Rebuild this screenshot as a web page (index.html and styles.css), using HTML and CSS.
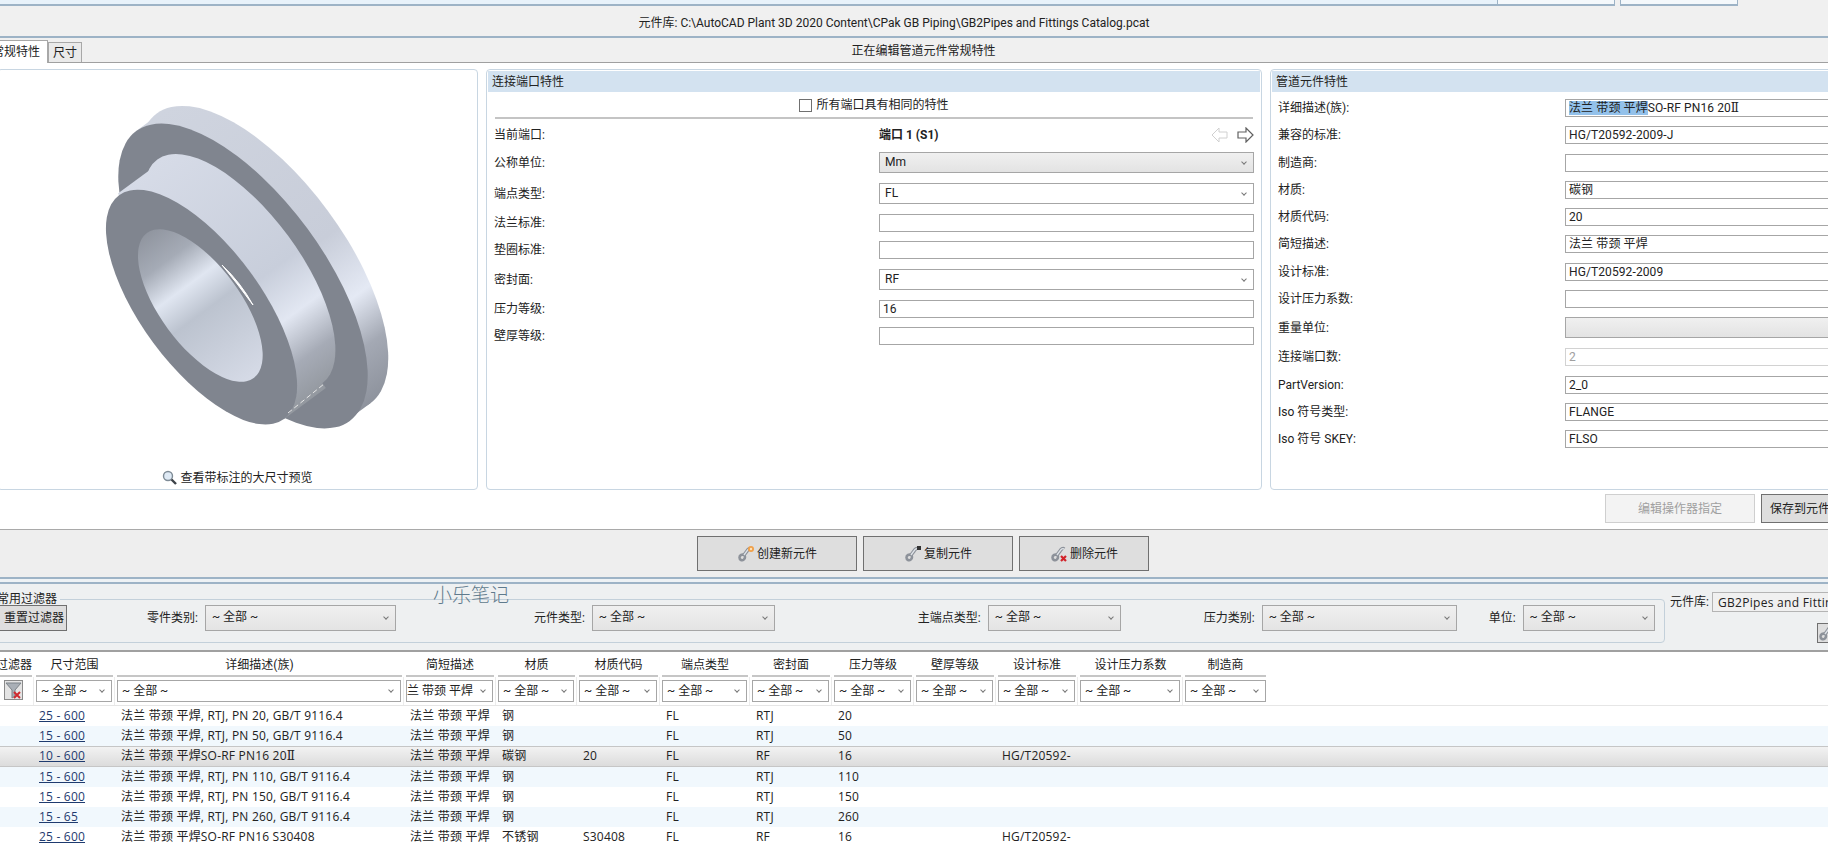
FILE: index.html
```html
<!DOCTYPE html>
<html>
	<head>
		<meta charset="utf-8">
		<title>元件库</title>
		<link rel="stylesheet" href="styles.css">
	</head>
	<body>
		<svg class="defs">
			<defs>
				<linearGradient id="rim" gradientUnits="userSpaceOnUse" x1="-180" y1="0" x2="180" y2="0">
					<stop offset="0" stop-color="#cfd4df"/><stop offset=".55" stop-color="#c8cdd9"/><stop offset=".73" stop-color="#e4e9f4"/><stop offset=".86" stop-color="#a4a9b4"/><stop offset="1" stop-color="#8d929c"/>
				</linearGradient>
				<linearGradient id="hub" gradientUnits="userSpaceOnUse" x1="-139" y1="0" x2="143" y2="0">
					<stop offset="0" stop-color="#d6dbe7"/><stop offset=".55" stop-color="#c8cedb"/><stop offset=".72" stop-color="#e2e7f2"/><stop offset=".87" stop-color="#a6abb6"/><stop offset="1" stop-color="#93989f"/>
				</linearGradient>
				<linearGradient id="bore" gradientUnits="userSpaceOnUse" x1="-90" y1="0" x2="90" y2="0">
					<stop offset="0" stop-color="#8f949e"/><stop offset=".2" stop-color="#a5abb6"/><stop offset=".38" stop-color="#e0e6f1"/><stop offset=".55" stop-color="#bcc3cf"/><stop offset="1" stop-color="#d5dae6"/>
				</linearGradient>
				<symbol id="part" viewBox="0 0 18 18">
					<path d="M4 15c-2-1-2-4 0-5s4 0 4 2-2 4-4 3z" fill="none" stroke="#8d929a" stroke-width="2.6"/>
					<path d="M7 10l3-4c1-2 3-3 4-2" fill="none" stroke="#8d929a" stroke-width="3.6"/>
					<path d="M7 10l3-4c1-2 3-3 4-2" fill="none" stroke="#dfe3e8" stroke-width="1.4"/>
				</symbol>
			</defs>
		</svg>

		<!-- 顶部 -->
		<div class="strip">
			<div class="strip-fill"></div>
			<div class="strip-tab"></div>
			<div class="strip-tab"></div>
		</div>
		<div class="catalog-bar">元件库: C:\AutoCAD Plant 3D 2020 Content\CPak GB Piping\GB2Pipes and Fittings Catalog.pcat</div>
		<div class="tab-bar">
			<div class="tab tab-on">常规特性</div>
			<div class="tab">尺寸</div>
			<div class="tab-title">正在编辑管道元件常规特性</div>
		</div>

		<div class="editor">
			<div class="panels">
				<!-- 预览 -->
				<div class="panel preview">
					<svg class="flange" viewBox="0 70 478 396">
						<g transform="translate(242 275) rotate(53.6)">
							<ellipse cx="-2" cy="-27" rx="180" ry="80" fill="url(#rim)"/>
							<rect x="-180" y="-27" width="358" height="27" fill="url(#rim)"/>
							<ellipse cx="0" cy="0" rx="180" ry="80" fill="#80858f"/>
						</g>
						<g transform="translate(240 272) rotate(53.6)">
							<ellipse cx="-2" cy="0" rx="139" ry="60" fill="url(#hub)"/>
							<rect x="-137" y="0" width="280" height="52" fill="url(#hub)"/>
							<ellipse cx="4" cy="52" rx="139" ry="60" fill="#80858f"/>
							<ellipse cx="2" cy="52" rx="90" ry="40" fill="url(#bore)"/>
						</g>
						<path d="M221 264Q240 282 252 304Q236 282 221 264z" fill="#fff" stroke="#fff"/>
						<path d="M287 412L323 383" stroke="#e8e8e8" stroke-dasharray="5 3" fill="none"/>
					</svg>
					<div class="preview-link">
						<svg width="15" height="15" viewBox="0 0 15 15"><circle cx="6" cy="6" r="4.5" fill="#dfeaf5" stroke="#7e8b96" stroke-width="1.4"/><path d="M9.5 9.5L14 14" stroke="#3c4248" stroke-width="2.4"/></svg>
						<span>查看带标注的大尺寸预览</span>
					</div>
				</div>

				<!-- 连接端口特性 -->
				<div class="panel port">
					<div class="panel-head">连接端口特性</div>
					<div class="check-row"><span class="check"></span>所有端口具有相同的特性</div>
					<div class="rows">
						<div class="row row-port">
							<div>当前端口:</div>
							<div class="port-name">
								<b>端口 1 (S1)</b>
								<span class="arrows">
									<svg width="17" height="16" viewBox="0 0 17 16"><path d="M16 5H8V1L1 8 8 15V11H16z" fill="#fff" stroke="#d0d0d0"/></svg>
									<svg width="17" height="16" viewBox="0 0 17 16"><path d="M1 5H9V1L16 8 9 15V11H1z" fill="#fff" stroke="#606060" stroke-width="1.2"/></svg>
								</span>
							</div>
						</div>
						<div class="row gap10"><div>公称单位:</div><div class="sel sel-grey">Mm</div></div>
						<div class="row gap10"><div>端点类型:</div><div class="sel">FL</div></div>
						<div class="row"><div>法兰标准:</div><div class="inp"></div></div>
						<div class="row gap10"><div>垫圈标准:</div><div class="inp"></div></div>
						<div class="row gap10"><div>密封面:</div><div class="sel">RF</div></div>
						<div class="row"><div>压力等级:</div><div class="inp">16</div></div>
						<div class="row"><div>壁厚等级:</div><div class="inp"></div></div>
					</div>
				</div>

				<!-- 管道元件特性 -->
				<div class="panel part">
					<div class="panel-head">管道元件特性</div>
					<div class="rows">
						<div class="row"><div>详细描述(族):</div><div class="inp"><span class="picked">法兰 带颈 平焊</span>SO-RF PN16 20<span class="roman">Ⅱ</span></div></div>
						<div class="row gap10"><div>兼容的标准:</div><div class="inp">HG/T20592-2009-J</div></div>
						<div class="row"><div>制造商:</div><div class="inp"></div></div>
						<div class="row"><div>材质:</div><div class="inp">碳钢</div></div>
						<div class="row"><div>材质代码:</div><div class="inp">20</div></div>
						<div class="row gap10"><div>简短描述:</div><div class="inp">法兰 带颈 平焊</div></div>
						<div class="row"><div>设计标准:</div><div class="inp">HG/T20592-2009</div></div>
						<div class="row"><div>设计压力系数:</div><div class="inp"></div></div>
						<div class="row gap10"><div>重量单位:</div><div class="sel-blank"></div></div>
						<div class="row gap10"><div>连接端口数:</div><div class="inp inp-off">2</div></div>
						<div class="row"><div>PartVersion:</div><div class="inp">2_0</div></div>
						<div class="row"><div>Iso 符号类型:</div><div class="inp">FLANGE</div></div>
						<div class="row"><div>Iso 符号 SKEY:</div><div class="inp">FLSO</div></div>
					</div>
				</div>
			</div>
			<div class="editor-btns">
				<div class="btn-off">编辑操作器指定</div>
				<div class="btn-save">保存到元件库</div>
			</div>
		</div>

		<!-- 创建 复制 删除 -->
		<div class="actions">
			<div class="act act-new">
				<svg width="18" height="18" viewBox="0 0 18 18"><use href="#part"/><circle cx="14" cy="4" r="3" fill="#f0a04a"/><circle cx="14" cy="4" r="1.2" fill="#fde2b8"/></svg>
				创建新元件
			</div>
			<div class="act act-copy">
				<svg width="18" height="18" viewBox="0 0 18 18"><use href="#part"/><rect x="13" y="1" width="4" height="4" fill="#333"/></svg>
				复制元件
			</div>
			<div class="act act-del">
				<svg width="18" height="18" viewBox="0 0 18 18"><use href="#part"/><path d="M11 11l5 5M16 11l-5 5" stroke="#d2232a" stroke-width="2.2"/></svg>
				删除元件
			</div>
		</div>
		<div class="split"></div>

		<!-- 常用过滤器 -->
		<div class="filters">
			<fieldset class="common">
				<legend>常用过滤器</legend>
				<div class="reset">重置过滤器</div>
				<div class="f-group f-part"><label>零件类别:</label><div class="sel sel-f">~ 全部 ~</div></div>
				<div class="f-group f-type"><label>元件类型:</label><div class="sel sel-f">~ 全部 ~</div></div>
				<div class="f-group f-end"><label>主端点类型:</label><div class="sel sel-f">~ 全部 ~</div></div>
				<div class="f-group f-press"><label>压力类别:</label><div class="sel sel-f">~ 全部 ~</div></div>
				<div class="f-group f-unit"><label>单位:</label><div class="sel sel-f">~ 全部 ~</div></div>
			</fieldset>
			<div class="catalog-side">
				<div class="catalog-pick"><label>元件库:</label><div class="catalog-name">GB2Pipes and Fittings Catalog</div></div>
				<div class="catalog-btn">
					<svg width="18" height="18" viewBox="0 0 18 18"><use href="#part"/></svg>
				</div>
			</div>
			<div class="watermark">小乐笔记</div>
		</div>

		<!-- 表格 -->
		<div class="grid">
			<div class="g-row g-head">
				<div class="cut-left">过滤器</div><div>尺寸范围</div><div>详细描述(族)</div><div>简短描述</div><div>材质</div><div>材质代码</div><div>端点类型</div><div>密封面</div><div>压力等级</div><div>壁厚等级</div><div>设计标准</div><div>设计压力系数</div><div>制造商</div>
			</div>
			<div class="g-row g-filter">
				<div><span class="funnel">
					<svg width="17" height="18" viewBox="0 0 17 18"><path d="M1 2H16L10 9V15L7 17V9z" fill="#a9afb6" stroke="#7d8389"/><path d="M9 11l6 6M15 11l-6 6" stroke="#cf2a2f" stroke-width="2"/></svg>
				</span></div>
				<div><div class="sel sel-g">~ 全部 ~</div></div>
				<div><div class="sel sel-g">~ 全部 ~</div></div>
				<div><div class="sel sel-g"><span class="clipped">法兰 带颈 平焊</span></div></div>
				<div><div class="sel sel-g">~ 全部 ~</div></div>
				<div><div class="sel sel-g">~ 全部 ~</div></div>
				<div><div class="sel sel-g">~ 全部 ~</div></div>
				<div><div class="sel sel-g">~ 全部 ~</div></div>
				<div><div class="sel sel-g">~ 全部 ~</div></div>
				<div><div class="sel sel-g">~ 全部 ~</div></div>
				<div><div class="sel sel-g">~ 全部 ~</div></div>
				<div><div class="sel sel-g">~ 全部 ~</div></div>
				<div><div class="sel sel-g">~ 全部 ~</div></div>
			</div>
			<div class="g-row g-data">
				<div></div><div><a>25 - 600</a></div><div>法兰 带颈 平焊, RTJ, PN 20, GB/T 9116.4</div><div>法兰 带颈 平焊</div><div>钢</div><div></div><div>FL</div><div>RTJ</div><div>20</div><div></div><div></div><div></div><div></div>
			</div>
			<div class="g-row g-data g-band">
				<div></div><div><a>15 - 600</a></div><div>法兰 带颈 平焊, RTJ, PN 50, GB/T 9116.4</div><div>法兰 带颈 平焊</div><div>钢</div><div></div><div>FL</div><div>RTJ</div><div>50</div><div></div><div></div><div></div><div></div>
			</div>
			<div class="g-row g-data g-on">
				<div></div><div><a>10 - 600</a></div><div>法兰 带颈 平焊SO-RF PN16 20<span class="roman">Ⅱ</span></div><div>法兰 带颈 平焊</div><div>碳钢</div><div>20</div><div>FL</div><div>RF</div><div>16</div><div></div><div>HG/T20592-</div><div></div><div></div>
			</div>
			<div class="g-row g-data g-band">
				<div></div><div><a>15 - 600</a></div><div>法兰 带颈 平焊, RTJ, PN 110, GB/T 9116.4</div><div>法兰 带颈 平焊</div><div>钢</div><div></div><div>FL</div><div>RTJ</div><div>110</div><div></div><div></div><div></div><div></div>
			</div>
			<div class="g-row g-data">
				<div></div><div><a>15 - 600</a></div><div>法兰 带颈 平焊, RTJ, PN 150, GB/T 9116.4</div><div>法兰 带颈 平焊</div><div>钢</div><div></div><div>FL</div><div>RTJ</div><div>150</div><div></div><div></div><div></div><div></div>
			</div>
			<div class="g-row g-data g-band">
				<div></div><div><a>15 - 65</a></div><div>法兰 带颈 平焊, RTJ, PN 260, GB/T 9116.4</div><div>法兰 带颈 平焊</div><div>钢</div><div></div><div>FL</div><div>RTJ</div><div>260</div><div></div><div></div><div></div><div></div>
			</div>
			<div class="g-row g-data">
				<div></div><div><a>25 - 600</a></div><div>法兰 带颈 平焊SO-RF PN16 S30408</div><div>法兰 带颈 平焊</div><div>不锈钢</div><div>S30408</div><div>FL</div><div>RF</div><div>16</div><div></div><div>HG/T20592-</div><div></div><div></div>
			</div>
		</div>
	</body>
</html>
```
FILE: styles.css
```css
*{
	margin: 0;
	padding: 0;
	box-sizing: border-box;
}

body{
	width: 1828px;
	height: 866px;
	overflow: hidden;
	position: relative;
	background: #fff;
	color: #222;
	font: 12px/16px Roboto, "Noto Sans CJK SC", sans-serif;
}

.defs{
	display: block;
	width: 0;
	height: 0;
}

.roman{
	font-family: "DejaVu Serif", serif;
}

/************************ 顶部 ************************/
.strip{
	display: flex;
	height: 6px;
	background: #f0f0f0;
}

.strip-fill{
	width: 1497px;
	background: #e8f2fa;
	border-bottom: 2px solid #9db3c6;
}

.strip-tab{
	width: 118px;
	border: 1px solid #9db3c6;
	border-width: 0 1px 2px;
	background: #f4f8fb;
}

.strip-tab + .strip-tab{
	margin-left: 5px;
}

.catalog-bar{
	height: 32px;
	padding: 9px 40px 0 0;
	text-align: center;
	background: #f0f0f0;
	border-bottom: 2px solid #9db3c6;
}

.tab-bar{
	display: flex;
	height: 25px;
	background: #f0f0f0;
	border-bottom: 1px solid #a0a0a0;
}

.tab{
	width: 34px;
	height: 20px;
	margin-top: 4px;
	padding-top: 2px;
	text-align: center;
	border: 1px solid #a8a8a8;
	border-bottom: 0;
	background: #eaeaea;
}

.tab-on{
	display: flex;
	justify-content: flex-end;
	width: 48px;
	height: 23px;
	margin: 2px 0 0;
	padding: 3px 7px 0 0;
	white-space: nowrap;
	border-left: 0;
	background: #fff;
	position: relative;
}

.tab-title{
	flex: 1;
	padding: 5px 63px 0 0;
	text-align: center;
}

/************************ 编辑区 ************************/
.editor{
	height: 467px;
	padding-top: 6px;
	border-bottom: 1px solid #a9a9a9;
}

.panels{
	display: flex;
	gap: 8px;
	height: 421px;
	margin-left: -3px;
}

.panel{
	flex: none;
	padding: 1px 1px;
	border: 1px solid #c8d6e2;
	border-radius: 4px;
}

.preview{
	width: 481px;
	display: flex;
	flex-direction: column;
}

.flange{
	display: block;
	width: 478px;
	height: 396px;
	margin-left: 2px;
	flex: none;
}

.preview-link{
	display: flex;
	justify-content: center;
	align-items: center;
	gap: 3px;
	height: 22px;
}

.port{
	width: 776px;
}

.part{
	width: 640px;
}

.panel-head{
	height: 21px;
	padding: 3px 0 0 4px;
	background: #d3e2f0;
}

.check-row{
	display: flex;
	justify-content: center;
	align-items: center;
	gap: 4px;
	height: 27px;
	margin: 0 7px;
	padding-top: 1px;
	border-bottom: 2px solid #c4c4c4;
}

.check{
	width: 13px;
	height: 13px;
	border: 1px solid #707070;
	background: #fff;
}

.rows{
	margin-left: 6px;
}

.port .rows{
	margin-top: 5px;
}

.part .rows{
	margin-top: 7px;
}

.row{
	display: grid;
	align-items: center;
	margin-bottom: 9px;
}

.gap10{
	margin-bottom: 10px;
}

.port .row{
	grid-template-columns: 385px 375px;
}

.part .row{
	grid-template-columns: 287px 1fr;
	margin-right: -10px;
}

.row-port{
	height: 22px;
	margin-bottom: 6px;
}

.port-name{
	display: flex;
	justify-content: space-between;
	align-items: center;
}

.arrows{
	display: flex;
	gap: 9px;
}

.inp{
	height: 18px;
	padding-left: 3px;
	line-height: 16px;
	white-space: nowrap;
	letter-spacing: .1px;
	border: 1px solid #a6a6a6;
	background: #fff;
}

.inp-off{
	color: #a0a0a0;
	border-color: #d2d2d2;
}

.picked{
	background: #93c1ea;
}

.sel{
	position: relative;
	height: 21px;
	padding-left: 5px;
	line-height: 19px;
	white-space: nowrap;
	overflow: hidden;
	border: 1px solid #a6a6a6;
	background: #fff;
}

.sel::after{
	content: "";
	position: absolute;
	right: 7px;
	top: 50%;
	width: 3px;
	height: 3px;
	margin-top: -3px;
	border: solid #777;
	border-width: 0 1px 1px 0;
	transform: rotate(45deg);
}

.sel-grey, .sel-blank{
	background: linear-gradient(#f0f0f0, #e3e3e3);
}

.sel-blank{
	height: 21px;
	border: 1px solid #a6a6a6;
}

.editor-btns{
	display: flex;
	gap: 6px;
	height: 29px;
	margin-top: 4px;
	padding-left: 1605px;
}

.btn-off, .btn-save{
	flex: none;
	line-height: 29px;
	text-align: center;
}

.btn-off{
	width: 150px;
	color: #a0a0a0;
	background: #f3f3f3;
	border: 1px solid #cfcfcf;
}

.btn-save{
	width: 110px;
	padding-left: 8px;
	text-align: left;
	background: #dedede;
	border: 1px solid #707070;
}

/************************ 按钮条 ************************/
.actions{
	display: flex;
	gap: 6px;
	height: 47px;
	padding: 6px 0 0 697px;
	background: #eee;
}

.act{
	display: flex;
	justify-content: center;
	align-items: center;
	gap: 2px;
	height: 35px;
	background: #dedede;
	border: 1px solid #707070;
}

.act-new{
	width: 160px;
}

.act-copy{
	width: 150px;
}

.act-del{
	width: 130px;
}

.split{
	height: 7px;
	background: #eef2f5;
	border: solid #9db3c6;
	border-width: 2px 0;
}

/************************ 过滤器 ************************/
.filters{
	position: relative;
	display: flex;
	height: 68px;
	background: #eef0f1;
	border-bottom: 2px solid #a0a0a0;
}

.common{
	display: flex;
	flex: none;
	width: 1669px;
	height: 52px;
	margin: 7px 0 0 -4px;
	padding: 0 9px 0 0;
	border: 1px solid #c3d0da;
	border-radius: 4px;
}

.common legend{
	padding-right: 3px;
}

.reset{
	flex: none;
	width: 70px;
	height: 26px;
	margin-top: -2px;
	padding-left: 6px;
	line-height: 24px;
	background: #dedede;
	border: 1px solid #707070;
}

.f-group{
	display: flex;
	flex: none;
	align-items: center;
	gap: 7px;
	height: 26px;
	margin-top: -2px;
}

.sel-f{
	height: 26px;
	line-height: 22px;
	padding-left: 6px;
	background: linear-gradient(#f0f0f0, #e4e4e4);
}

.f-part{ margin-left: 80px; }
.f-part .sel{ width: 191px; }
.f-type{ margin-left: 138px; }
.f-type .sel{ width: 183px; }
.f-end{ margin-left: 143px; }
.f-end .sel{ width: 133px; }
.f-press{ margin-left: 83px; }
.f-press .sel{ width: 195px; }
.f-unit{ margin-left: 32px; }
.f-unit .sel{ width: 132px; }

.catalog-side{
	flex: none;
	width: 300px;
	margin-left: 5px;
	padding-top: 8px;
}

.catalog-pick{
	display: flex;
	align-items: center;
	gap: 3px;
	white-space: nowrap;
}

.catalog-name{
	width: 200px;
	height: 20px;
	padding-left: 5px;
	line-height: 19px;
	font-family: "Open Sans", sans-serif;
	letter-spacing: .3px;
	background: #f0f0f0;
	border: 1px solid #b4b4b4;
}

.catalog-btn{
	width: 22px;
	height: 20px;
	margin: 11px 0 0 147px;
	background: #dedede;
	border: 1px solid #707070;
}

.watermark{
	position: absolute;
	left: 433px;
	top: 0;
	font-size: 19px;
	font-weight: 300;
	line-height: 24px;
	color: #5f7a8c;
}

/************************ 表格 ************************/
.g-row{
	display: grid;
	grid-template-columns: 34px 81px 289px 92px 81px 83px 90px 82px 82px 82px 82px 105px 85px 1fr;
}

.g-head > div{
	height: 25px;
	margin: 0 2px;
	padding-top: 5px;
	text-align: center;
	white-space: nowrap;
	border-bottom: 2px solid #c6c6c6;
}

.g-head .cut-left{
	display: flex;
	justify-content: flex-end;
	margin-left: 0;
}

.g-filter{
	height: 29px;
	border-bottom: 1px solid #e6e6e6;
}

.g-filter > div{
	padding: 3px 2px 0;
	border-right: 1px solid #ececec;
}

.g-filter > div:nth-child(13){
	border-right: 0;
}

.funnel{
	display: block;
	width: 19px;
	height: 20px;
	margin: 0 0 0 2px;
	padding-left: 0;
	background: #e4e4e4;
	border: 1px solid #8a8a8a;
}

.sel-g{
	height: 22px;
	line-height: 20px;
	padding-left: 4px;
}

.clipped{
	margin-left: -16px;
}

.g-data{
	height: 20px;
	font-family: "Open Sans", "Noto Sans CJK SC", sans-serif;
	line-height: 20px;
	letter-spacing: .2px;
	white-space: nowrap;
}

.g-data > div{
	padding-left: 6px;
}

.g-data > div:nth-child(2){
	padding-left: 5px;
}

.g-data a{
	color: #1f3b6f;
	text-decoration: underline;
}

.g-band{
	background: #f1f8fd;
}

.g-on{
	height: 21px;
	background: linear-gradient(#f2f2f2, #dcdcdc);
	border-top: 1px solid #c6c6c6;
	border-bottom: 1px solid #c6c6c6;
	line-height: 18px;
}
```
